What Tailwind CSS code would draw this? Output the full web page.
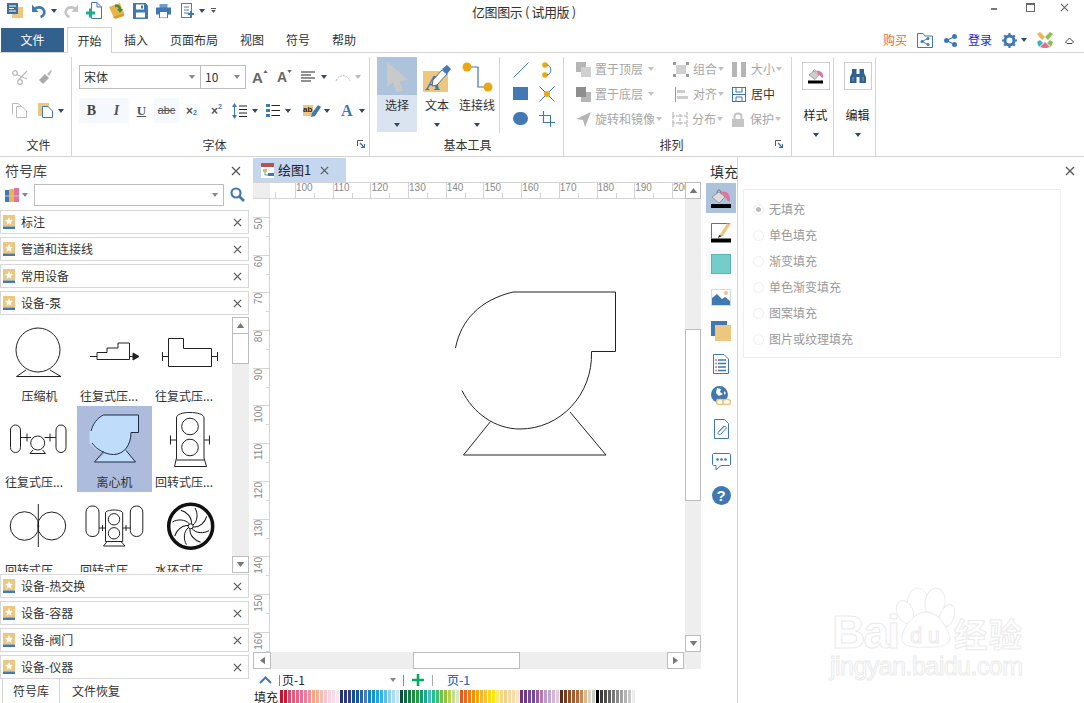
<!DOCTYPE html>
<html lang="zh-CN">
<head>
    <meta charset="UTF-8" />
    <title>亿图图示</title>
    <script src="https://cdn.jsdelivr.net/npm/@tailwindcss/browser@4"></script>
</head>
<body class="bg-white">

<svg class="absolute w-0 h-0">
    <symbol id="caret" viewBox="0 0 6 4"><polygon points="0,0 6,0 3,4" fill="currentColor" /></symbol>
    <symbol id="close" viewBox="0 0 10 10"><path d="M1 1L9 9M9 1L1 9" stroke="currentColor" stroke-width="1.3" fill="none" /></symbol>
    <symbol id="corner" viewBox="0 0 8 8"><path d="M.5 6V.5H6" stroke="#555" fill="none" /><path d="M3 3L7.5 7.5M7.5 4V7.5H4" stroke="#3f6f9f" stroke-width="1.4" fill="none" /></symbol>
    <symbol id="tag" viewBox="0 0 12 14"><rect width="12" height="11.5" fill="#edc67f" /><rect y="11.5" width="12" height="2.5" fill="#4279b3" /><polygon points="6,2 7.2,4.7 10,5 7.9,6.9 8.5,9.7 6,8.2 3.5,9.7 4.1,6.9 2,5 4.8,4.7" fill="#fff" /></symbol>
</svg>

<div class="relative w-[1084px] h-[703px] overflow-hidden flex flex-col font-['Noto_Sans_CJK_SC','Liberation_Sans',sans-serif] text-[12px] text-[#333]">

    <!-- title bar -->
    <div class="relative h-[27px] shrink-0 flex items-center pl-[7px] pb-[6px]">
        <svg class="w-[16px] h-[15px]" viewBox="0 0 16 15"><rect x="5" y="4" width="11" height="11" fill="#edc67f" /><rect width="11" height="11" fill="#3f6f9f" /><path d="M2 3H9M2 5.5H7M2 8H9" stroke="#fff" stroke-width="1.2" /></svg>
        <svg class="w-[15px] h-[15px] ml-[8px]" viewBox="0 0 15 15"><path d="M2.500 8C4 3.500 11 3 13 7.500C14 10 12.500 13 9.500 14" stroke="#4279b3" stroke-width="2.600" fill="none" /><polygon points="1,1.500 1,9 7.500,9" fill="#4279b3" /></svg>
        <svg class="w-[6px] h-[4px] ml-[5px] text-[#2d4a6d]"><use href="#caret" /></svg>
        <svg class="w-[15px] h-[15px] ml-[7px]" viewBox="0 0 15 15"><path d="M12.500 8C11 3.500 4 3 2 7.500C1 10 2.500 13 5.500 14" stroke="#c4c4c4" stroke-width="2.600" fill="none" /><polygon points="14,1.500 14,9 7.500,9" fill="#c4c4c4" /></svg>
        <svg class="w-[16px] h-[17px] ml-[7px]" viewBox="0 0 16 17"><path d="M5.500.5H11L15.500 5V16.500H5.500Z" fill="#fff" stroke="#4279b3" /><path d="M11 .5V5H15.500" fill="none" stroke="#4279b3" /><path d="M0 11H9M4.500 6.500V15.500" stroke="#1cae8c" stroke-width="3" /></svg>
        <svg class="w-[16px] h-[16px] ml-[7px]" viewBox="0 0 16 16"><polygon points="0,4 11,0 15,10 5,15" fill="#e9b54a" /><polygon points="4,14 15,10 15,13 6,16" fill="#d79a2c" /><path d="M6 3C9 2 11 4 11 7" stroke="#3c8f45" stroke-width="2.500" fill="none" /><polygon points="8,6 14,6 11,10" fill="#3c8f45" /></svg>
        <svg class="w-[15px] h-[16px] ml-[8px]" viewBox="0 0 15 16"><path d="M0 0H12.500L15 2.500V16H0Z" fill="#3f78b3" /><rect x="3" y="1.500" width="8" height="5" fill="#fff" /><rect x="3" y="9.500" width="9" height="5" fill="#fff" /><rect x="8" y="2.500" width="2" height="3" fill="#3f78b3" /></svg>
        <svg class="w-[15px] h-[14px] ml-[8px]" viewBox="0 0 15 14"><rect x="3.500" width="8" height="4" fill="#6f9cc8" /><rect y="3.500" width="15" height="7" fill="#3f78b3" /><rect x="3.500" y="7.500" width="8" height="6.500" fill="#fff" stroke="#3f78b3" /></svg>
        <svg class="w-[14px] h-[16px] ml-[10px]" viewBox="0 0 14 16"><rect x=".5" y=".5" width="10" height="14" fill="#fff" stroke="#5a7d9f" /><path d="M3 4H8M3 7H8M3 10H8" stroke="#5a7d9f" /><path d="M7 11H13M10 8V14" stroke="#3f78b3" stroke-width="2" /></svg>
        <svg class="w-[6px] h-[4px] ml-[4px] text-[#2d4a6d]"><use href="#caret" /></svg>
        <div class="ml-[6px] flex flex-col gap-[1px] text-[#555]"><div class="w-[5px] h-px bg-[#555]"></div><svg class="w-[5px] h-[3px]"><use href="#caret" /></svg></div>

        <div class="absolute left-[472px] top-[3px] text-[13px] leading-[18px] text-[#333] tracking-[-0.4px]">亿图图示 ( 试用版 )</div>

        <div class="absolute left-[991px] top-0 flex items-center h-[14px]">
            <div class="w-[6px] h-[2px] bg-[#777] mt-[4px]"></div>
            <div class="w-[9px] h-[9px] border border-[#666] border-t-2 ml-[29px]"></div>
            <svg class="w-[9px] h-[9px] ml-[25px] text-[#666]"><use href="#close" /></svg>
        </div>
    </div>

    <!-- ribbon tabs -->
    <div class="relative z-10 h-[25px] shrink-0 flex items-end text-[12px]">
        <div class="ml-[1px] w-[63px] h-[24px] bg-[#33618e] text-white flex items-center justify-center">文件</div>
        <div class="ml-[3px] w-[45px] h-[26px] -mb-px bg-white border border-b-0 border-[#d0d0d0] flex items-center justify-center">开始</div>
        <div class="ml-[12px] w-[24px] h-[24px] flex items-center">插入</div>
        <div class="ml-[22px] w-[48px] h-[24px] flex items-center">页面布局</div>
        <div class="ml-[22px] w-[24px] h-[24px] flex items-center">视图</div>
        <div class="ml-[22px] w-[24px] h-[24px] flex items-center">符号</div>
        <div class="ml-[22px] w-[24px] h-[24px] flex items-center">帮助</div>

        <div class="ml-auto h-[24px] flex items-center pr-[10px]">
            <span class="text-[#f26d0c]">购买</span>
            <svg class="w-[16px] h-[15px] ml-[10px]" viewBox="0 0 16 15"><path d="M.5 14.500V.5H6L8 3H15.500V14.500Z" fill="none" stroke="#3f78b3" /><circle cx="5" cy="8.500" r="1.500" fill="#3f78b3" /><circle cx="11" cy="5.500" r="1.500" fill="#3f78b3" /><circle cx="11" cy="11.500" r="1.500" fill="#3f78b3" /><path d="M5 8.500L11 5.500M5 8.500L11 11.500" stroke="#3f78b3" /></svg>
            <svg class="w-[13px] h-[13px] ml-[11px]" viewBox="0 0 13 13"><circle cx="2.500" cy="6.500" r="2.500" fill="#3f78b3" /><circle cx="10.500" cy="2.500" r="2.500" fill="#3f78b3" /><circle cx="10.500" cy="10.500" r="2.500" fill="#3f78b3" /><path d="M2.500 6.500L10.500 2.500M2.500 6.500L10.500 10.500" stroke="#3f78b3" stroke-width="1.300" /></svg>
            <span class="ml-[11px] text-[#1a1ae0]">登录</span>
            <svg class="w-[15px] h-[15px] ml-[10px]" viewBox="0 0 15 15"><circle cx="7.500" cy="7.500" r="4.500" fill="none" stroke="#3f78b3" stroke-width="3" /><path d="M7.500 0V15M0 7.500H15M2.200 2.200L12.800 12.800M12.800 2.200L2.200 12.800" stroke="#3f78b3" stroke-width="2.200" stroke-dasharray="2.500 10 2.500" /></svg>
            <svg class="w-[6px] h-[4px] ml-[4px] text-[#2d4a6d]"><use href="#caret" /></svg>
            <svg class="w-[16px] h-[16px] ml-[10px]" viewBox="0 0 16 16"><polygon points="0,2 3,0 8,5 5,8" fill="#edb54a" /><polygon points="16,2 13,0 8,5 11,8" fill="#8cc152" /><polygon points="0,10 3,8 6,11 2,15" fill="#2fb4c9" /><polygon points="16,10 13,8 10,11 14,15" fill="#8cc152" /><polygon points="3,15 8,10 13,15 10,16 6,16" fill="#ec6a94" /></svg>
            <svg class="w-[9px] h-[7px] ml-[12px]" viewBox="0 0 9 7"><path d="M.5 5L4.500 1L8.500 5L7 6.500H2Z" fill="none" stroke="#444" /></svg>
        </div>
    </div>

    <!-- ribbon -->
    <div class="h-[105px] shrink-0 flex border-y border-[#d4d4d4] pt-[4px] text-[12px]">

        <!-- file group -->
        <div class="w-[72px] flex flex-col border-r border-[#d4d4d4]">
            <div class="h-[76px] pt-[13px]">
                <div class="flex items-center pl-[12px]">
                    <svg class="w-[16px] h-[15px]" viewBox="0 0 16 15"><circle cx="3" cy="3" r="2.300" fill="none" stroke="#bbb" stroke-width="1.300" /><circle cx="8" cy="12" r="2.300" fill="none" stroke="#bbb" stroke-width="1.300" /><path d="M4.500 4.500L15 9M7 9.500L15 1" stroke="#bbb" stroke-width="1.300" /></svg>
                    <svg class="w-[14px] h-[15px] ml-[10px]" viewBox="0 0 14 15"><polygon points="9,4 13,0 14,1 11,6" fill="#bbb" /><polygon points="1,10 7,4 11,8 5,14" fill="#aaa" /></svg>
                </div>
                <div class="flex items-center pl-[12px] mt-[18px]">
                    <svg class="w-[15px] h-[15px]" viewBox="0 0 15 15"><path d="M.5 11.500V.5H6L9 3" fill="none" stroke="#bbb" /><path d="M4.500 14.500V3.500H10L14.500 8V14.500Z" fill="#fff" stroke="#bbb" /></svg>
                    <svg class="w-[15px] h-[15px] ml-[11px]" viewBox="0 0 15 15"><rect width="11" height="13" fill="#edc67f" /><path d="M4.500 14.500V3.500H10L14.500 8V14.500Z" fill="#fff" stroke="#3f78b3" /></svg>
                    <svg class="w-[6px] h-[4px] ml-[5px] text-[#2d4a6d]"><use href="#caret" /></svg>
                </div>
            </div>
            <div class="flex-1 flex items-center justify-center pl-[6px]">文件</div>
        </div>

        <!-- font group -->
        <div class="relative w-[298px] flex flex-col border-r border-[#d4d4d4]">
            <div class="h-[76px] pt-[8px] pl-[7px]">
                <div class="flex items-center h-[24px]">
                    <div class="w-[122px] h-[24px] border border-[#bdbdbd] flex items-center justify-between pl-[4px] pr-[5px]">宋体<svg class="w-[6px] h-[4px] text-[#888]"><use href="#caret" /></svg></div>
                    <div class="w-[45px] h-[24px] border border-l-0 border-[#bdbdbd] flex items-center justify-between pl-[4px] pr-[5px]">10<svg class="w-[6px] h-[4px] text-[#888]"><use href="#caret" /></svg></div>
                    <div class="ml-[6px] w-[17px] flex items-start font-['Liberation_Sans'] text-[15px] text-[#666] font-bold leading-none">A<svg class="w-[5px] h-[3px] text-[#666]" viewBox="0 0 6 4"><polygon points="0,4 6,4 3,0" fill="currentColor" /></svg></div>
                    <div class="ml-[8px] w-[17px] flex items-start font-['Liberation_Sans'] text-[14px] text-[#666] font-bold leading-none">A<svg class="w-[5px] h-[3px] text-[#666]"><use href="#caret" /></svg></div>
                    <svg class="w-[14px] h-[12px] ml-[7px]" viewBox="0 0 14 12"><path d="M0 1H14M0 4H10M0 7H14M0 10H10" stroke="#222" /></svg>
                    <svg class="w-[6px] h-[4px] ml-[6px] text-[#2d4a6d]"><use href="#caret" /></svg>
                    <svg class="w-[16px] h-[9px] ml-[8px]" viewBox="0 0 16 9"><path d="M1 8C3 1 13 1 15 8" fill="none" stroke="#bbb" stroke-dasharray="2 1" /></svg>
                    <svg class="w-[6px] h-[4px] ml-[4px] text-[#bbb]"><use href="#caret" /></svg>
                </div>
                <div class="flex items-center h-[25px] mt-[9px]">
                    <div class="w-[25px] h-[25px] bg-[#f5f8fc] flex items-center justify-center font-['Liberation_Serif'] font-bold text-[14px] text-[#444]">B</div>
                    <div class="w-[25px] h-[25px] bg-[#f5f8fc] flex items-center justify-center font-['Liberation_Serif'] italic font-bold text-[14px] text-[#555]">I</div>
                    <div class="w-[25px] h-[25px] flex items-center justify-center font-['Liberation_Serif'] underline font-bold text-[13px] text-[#555]">U</div>
                    <div class="w-[25px] h-[25px] bg-[#f5f8fc] flex items-center justify-center font-['Liberation_Sans'] line-through text-[11px] text-[#555]">abc</div>
                    <div class="w-[25px] h-[25px] flex items-center justify-center font-['Liberation_Sans'] font-bold text-[12px] text-[#555]">×<span class="text-[7px] text-[#3f78b3] mt-[6px]">2</span></div>
                    <div class="w-[25px] h-[25px] flex items-center justify-center font-['Liberation_Sans'] font-bold text-[12px] text-[#555]">×<span class="text-[7px] text-[#3f78b3] mb-[6px]">2</span></div>
                    <svg class="w-[15px] h-[16px] ml-[3px]" viewBox="0 0 15 16"><path d="M2.500 2V14" stroke="#3f78b3" /><polygon points="0,4 5,4 2.500,0" fill="#3f78b3" /><polygon points="0,12 5,12 2.500,16" fill="#3f78b3" /><path d="M7 3H15M7 6.500H15M7 10H15M7 13.500H15" stroke="#222" /></svg>
                    <svg class="w-[6px] h-[4px] ml-[5px] text-[#2d4a6d]"><use href="#caret" /></svg>
                    <svg class="w-[14px] h-[13px] ml-[8px]" viewBox="0 0 14 13"><path d="M0 0H4V3H0ZM0 5H4V8H0ZM0 10H4V13H0Z" fill="#3f78b3" /><path d="M5.500 1.500H14M5.500 6.500H14M5.500 11.500H14" stroke="#222" /></svg>
                    <svg class="w-[6px] h-[4px] ml-[5px] text-[#2d4a6d]"><use href="#caret" /></svg>
                    <svg class="w-[18px] h-[14px] ml-[12px]" viewBox="0 0 18 14"><rect y="1" width="10" height="11" fill="#edc67f" /><text x="0" y="8" font-size="8" font-family="Liberation Sans" font-weight="bold" fill="#222">ab</text><polygon points="9,9 15,1 18,3 12,12 8,13" fill="#3f78b3" /></svg>
                    <svg class="w-[6px] h-[4px] ml-[3px] text-[#2d4a6d]"><use href="#caret" /></svg>
                    <div class="ml-[11px] w-[12px] font-['Liberation_Serif'] font-bold text-[16px] leading-none text-[#3f78b3]">A</div>
                    <svg class="w-[6px] h-[4px] ml-[6px] text-[#2d4a6d]"><use href="#caret" /></svg>
                </div>
            </div>
            <div class="relative flex-1 flex items-center justify-center pr-[12px]">字体
                <svg class="absolute right-[4px] top-[7px] w-[8px] h-[8px]"><use href="#corner" /></svg>
            </div>
        </div>

        <!-- basic tools -->
        <div class="w-[194px] flex flex-col border-r border-[#d4d4d4]">
            <div class="h-[76px] flex pl-[7px]">
                <div class="w-[40px] h-[75px] flex flex-col">
                    <div class="h-[38px] bg-[#adc3dc] flex items-center justify-center">
                        <svg class="w-[24px] h-[31px]" viewBox="0 0 24 31"><polygon points="2,1 23,19 14,20 18,30 11,31 8,21 2,26" fill="#c9c9c9" /></svg>
                    </div>
                    <div class="flex-1 bg-[#d9e4f0] flex flex-col items-center pt-[1px]">
                        <span class="leading-[18px]">选择</span>
                        <svg class="w-[6px] h-[4px] mt-[9px] text-[#2d4a6d]"><use href="#caret" /></svg>
                    </div>
                </div>
                <div class="w-[40px] flex flex-col items-center">
                    <svg class="w-[28px] h-[32px] mt-[5px]" viewBox="0 0 28 32"><rect y="9" width="25" height="21" fill="#edc67f" /><text x="3" y="28" font-size="22" font-family="Liberation Serif" font-style="italic" font-weight="bold" fill="#3f78b3">A</text><polygon points="10,18 19,8 24,12 14,23 9,24" fill="#fff" stroke="#4a6d90" /><polygon points="19,7 24,3 28,7 24,12" fill="#3f78b3" /></svg>
                    <span class="leading-[18px] mt-[2px]">文本</span>
                    <svg class="w-[6px] h-[4px] mt-[9px] text-[#2d4a6d]"><use href="#caret" /></svg>
                </div>
                <div class="w-[40px] flex flex-col items-center">
                    <svg class="w-[31px] h-[30px] mt-[5px] mb-[3px]" viewBox="0 0 31 30"><path d="M5 5H16V25H26" fill="none" stroke="#3f78b3" stroke-width="1.200" /><circle cx="5" cy="5" r="4.500" fill="#eba613" /><circle cx="26" cy="25" r="4.500" fill="#eba613" /></svg>
                    <span class="leading-[18px] mt-[1px] whitespace-nowrap">连接线</span>
                    <svg class="w-[6px] h-[4px] mt-[9px] text-[#2d4a6d]"><use href="#caret" /></svg>
                </div>
                <div class="w-px h-[76px] bg-[#d4d4d4] ml-[2px]"></div>
                <div class="ml-[13px] pt-[5px] grid grid-cols-2 grid-rows-3 w-[42px] h-[80px] gap-x-[9px]">
                    <svg class="w-[16px] h-[16px]" viewBox="0 0 16 16"><path d="M.5 15.500L15.500 .5" stroke="#3f78b3" /></svg>
                    <svg class="w-[16px] h-[16px]" viewBox="0 0 16 16"><circle cx="6" cy="3" r="2.800" fill="#eba613" /><circle cx="6" cy="13" r="2.800" fill="#eba613" /><path d="M8 3C13 3 13 13 8 13" fill="none" stroke="#3f78b3" /></svg>
                    <div class="w-[15px] h-[13px] bg-[#4279b3]"></div>
                    <svg class="w-[16px] h-[16px] -mt-[1px]" viewBox="0 0 16 16"><path d="M.5 .5L15.500 15.500M15.500 .5L.5 15.500" stroke="#3f78b3" /><circle cx="8" cy="8" r="3" fill="#eba613" /></svg>
                    <div class="w-[15px] h-[13px] rounded-full bg-[#4279b3]"></div>
                    <svg class="w-[16px] h-[16px] -mt-[1px]" viewBox="0 0 16 16"><path d="M0 4.500H11.500V16M4.500 0V11.500H16" fill="none" stroke="#3f78b3" stroke-width="1.200" /></svg>
                </div>
            </div>
            <div class="flex-1 flex items-center justify-center pl-[2px]">基本工具</div>
        </div>

        <!-- arrange -->
        <div class="relative w-[228px] flex flex-col border-r border-[#d4d4d4] text-[#a6a6a6]">
            <div class="h-[76px] pl-[12px] flex flex-col gap-[1px]">
                <div class="flex items-center h-[24px]">
                    <svg class="w-[15px] h-[15px]" viewBox="0 0 15 15"><rect width="10" height="10" fill="#b5b5b5" /><rect x="5" y="5" width="10" height="10" fill="#d0d0d0" /></svg>
                    <span class="ml-[4px] w-[48px]">置于顶层</span>
                    <svg class="w-[6px] h-[4px] ml-[5px] text-[#c2c2c2]"><use href="#caret" /></svg>
                    <svg class="w-[16px] h-[15px] ml-[19px]" viewBox="0 0 16 15"><rect x="3" y="3" width="10" height="9" fill="#d0d0d0" /><path d="M0 0H3V3H0ZM13 0H16V3H13ZM0 12H3V15H0ZM13 12H16V15H13Z" fill="#999" /></svg>
                    <span class="ml-[4px] w-[24px]">组合</span>
                    <svg class="w-[6px] h-[4px] ml-[1px] text-[#c2c2c2]"><use href="#caret" /></svg>
                    <svg class="w-[14px] h-[15px] ml-[8px]" viewBox="0 0 14 15"><rect width="5" height="15" fill="#b5b5b5" /><rect x="9" width="5" height="15" fill="#b5b5b5" /></svg>
                    <span class="ml-[5px] w-[24px]">大小</span>
                    <svg class="w-[6px] h-[4px] ml-[1px] text-[#c2c2c2]"><use href="#caret" /></svg>
                </div>
                <div class="flex items-center h-[24px]">
                    <svg class="w-[15px] h-[15px]" viewBox="0 0 15 15"><rect x="5" y="5" width="10" height="10" fill="#b5b5b5" /><rect width="10" height="10" fill="#8e8e8e" /></svg>
                    <span class="ml-[4px] w-[48px]">置于底层</span>
                    <svg class="w-[6px] h-[4px] ml-[5px] text-[#c2c2c2]"><use href="#caret" /></svg>
                    <svg class="w-[16px] h-[15px] ml-[19px]" viewBox="0 0 16 15"><path d="M2.500 0V15" stroke="#999" /><rect x="4" y="3" width="8" height="3" fill="#ccc" /><rect x="4" y="9" width="11" height="3" fill="#ccc" /></svg>
                    <span class="ml-[4px] w-[24px]">对齐</span>
                    <svg class="w-[6px] h-[4px] ml-[1px] text-[#c2c2c2]"><use href="#caret" /></svg>
                    <svg class="w-[14px] h-[15px] ml-[8px]" viewBox="0 0 14 15"><rect x=".5" y=".5" width="13" height="14" fill="none" stroke="#3f78b3" /><path d="M4 .5V5H10V.5M.5 7.500H13.500M4 14.500V10H10V14.500" fill="none" stroke="#3f78b3" /></svg>
                    <span class="ml-[5px] w-[24px] text-[#333]">居中</span>
                </div>
                <div class="flex items-center h-[24px]">
                    <svg class="w-[15px] h-[15px]" viewBox="0 0 15 15"><polygon points="0,7 15,0 9,15 7,8" fill="#b5b5b5" /></svg>
                    <span class="ml-[4px] w-[60px] whitespace-nowrap">旋转和镜像</span>
                    <svg class="w-[6px] h-[4px] ml-[1px] text-[#c2c2c2]"><use href="#caret" /></svg>
                    <svg class="w-[16px] h-[15px] ml-[10px]" viewBox="0 0 16 15"><path d="M1 0V15M15 0V15M0 4H16M0 11H16M8 2V13" stroke="#aaa" fill="none" stroke-dasharray="3 1" /></svg>
                    <span class="ml-[4px] w-[24px]">分布</span>
                    <svg class="w-[6px] h-[4px] ml-[1px] text-[#c2c2c2]"><use href="#caret" /></svg>
                    <svg class="w-[14px] h-[15px] ml-[8px]" viewBox="0 0 14 15"><path d="M3.500 7V4.500C3.500 0.500 10.500 0.500 10.500 4.500V7" fill="none" stroke="#c4c4c4" stroke-width="2" /><rect x="1" y="7" width="12" height="8" fill="#c4c4c4" /></svg>
                    <span class="ml-[5px] w-[24px]">保护</span>
                    <svg class="w-[6px] h-[4px] ml-[1px] text-[#c2c2c2]"><use href="#caret" /></svg>
                </div>
            </div>
            <div class="relative flex-1 flex items-center justify-center text-[#333] pr-[12px]">排列
                <svg class="absolute right-[8px] top-[7px] w-[8px] h-[8px]"><use href="#corner" /></svg>
            </div>
        </div>

        <!-- style -->
        <div class="w-[42px] flex flex-col items-center border-r border-[#d4d4d4] pt-[5px] pl-[6px]">
            <div class="w-[28px] h-[28px] shrink-0 border border-[#cfcfcf] flex items-center justify-center">
                <svg class="w-[16px] h-[16px]" viewBox="0 0 16 16"><path d="M5 4C5 1 8 1 8 4" fill="none" stroke="#777" stroke-width=".7" /><polygon points="1,7 6,3 11,7 7,11.500" fill="#cfcfcf" stroke="#777" stroke-width=".6" /><path d="M8 3C11 2 16 4 15 9.500C14 10.500 13 8 11 7Z" fill="#e4739b" /><rect y="12.500" width="15" height="3" fill="#000" /></svg>
            </div>
            <span class="mt-[16px] leading-[18px] text-[#222]">样式</span>
            <svg class="w-[6px] h-[4px] mt-[9px] text-[#2d4a6d]"><use href="#caret" /></svg>
        </div>

        <!-- edit -->
        <div class="w-[42px] flex flex-col items-center border-r border-[#d4d4d4] pt-[5px] pl-[6px]">
            <div class="w-[28px] h-[28px] shrink-0 border border-[#cfcfcf] flex items-center justify-center">
                <svg class="w-[16px] h-[16px]" viewBox="0 0 16 16"><path d="M2 1H6.500V6H9.500V1H14V5L16 9V15H9.500V9H6.500V15H0V9L2 5Z" fill="#33618e" /><path d="M3 9V13M13 9V13" stroke="#7fa3c7" /></svg>
            </div>
            <span class="mt-[16px] leading-[18px] text-[#222]">编辑</span>
            <svg class="w-[6px] h-[4px] mt-[9px] text-[#2d4a6d]"><use href="#caret" /></svg>
        </div>
    </div>

    <!-- main -->
    <div class="flex-1 flex min-h-0">

        <!-- symbol library -->
        <div class="w-[253px] shrink-0 flex flex-col">
            <div class="h-[27px] shrink-0 flex items-center justify-between pl-[5px] pr-[12px] text-[14px] text-[#444]">符号库
                <svg class="w-[10px] h-[10px] text-[#555]"><use href="#close" /></svg>
            </div>
            <div class="h-[26px] shrink-0 flex items-start pl-[5px]">
                <svg class="w-[14px] h-[15px] mt-[3px]" viewBox="0 0 14 15"><rect y="3" width="4.500" height="12" fill="#3f78b3" /><rect x="4.500" y="2" width="4.500" height="13" fill="#edb54a" /><rect x="9" y="1" width="5" height="14" fill="#e4739b" /><path d="M0 9H14" stroke="#bcd" /></svg>
                <svg class="w-[6px] h-[4px] ml-[3px] mt-[9px] text-[#888]"><use href="#caret" /></svg>
                <div class="ml-[6px] w-[190px] h-[22px] border border-[#bdbdbd] flex items-center justify-end pr-[5px]"><svg class="w-[6px] h-[4px] text-[#888]"><use href="#caret" /></svg></div>
                <svg class="w-[15px] h-[15px] ml-[6px] mt-[3px]" viewBox="0 0 15 15"><circle cx="6" cy="6" r="4.500" fill="none" stroke="#3f78b3" stroke-width="2.200" /><path d="M9.500 9.500L14 14" stroke="#3f78b3" stroke-width="2.600" /></svg>
            </div>

            <div class="w-[249px] flex flex-col gap-[3px] shrink-0">
                <div class="h-[24px] border border-[#d8d8d8] flex items-center pl-[2px] pr-[6px]"><svg class="w-[12px] h-[14px]"><use href="#tag" /></svg><span class="ml-[6px] flex-1">标注</span><svg class="w-[9px] h-[9px] text-[#555]"><use href="#close" /></svg></div>
                <div class="h-[24px] border border-[#d8d8d8] flex items-center pl-[2px] pr-[6px]"><svg class="w-[12px] h-[14px]"><use href="#tag" /></svg><span class="ml-[6px] flex-1">管道和连接线</span><svg class="w-[9px] h-[9px] text-[#555]"><use href="#close" /></svg></div>
                <div class="h-[24px] border border-[#d8d8d8] flex items-center pl-[2px] pr-[6px]"><svg class="w-[12px] h-[14px]"><use href="#tag" /></svg><span class="ml-[6px] flex-1">常用设备</span><svg class="w-[9px] h-[9px] text-[#555]"><use href="#close" /></svg></div>
                <div class="h-[24px] border border-[#d8d8d8] flex items-center pl-[2px] pr-[6px]"><svg class="w-[12px] h-[14px]"><use href="#tag" /></svg><span class="ml-[6px] flex-1">设备-泵</span><svg class="w-[9px] h-[9px] text-[#555]"><use href="#close" /></svg></div>
            </div>

            <!-- gallery -->
            <div class="h-[259px] shrink-0 w-[249px] flex overflow-hidden">
                <div class="w-[232px] h-[257px] overflow-hidden pl-[2px] pt-[5px]">
                    <div class="grid grid-cols-[75px_75px_75px] auto-rows-[86px]">
                        <div class="flex flex-col items-center">
                            <svg class="w-[75px] h-[70px]" viewBox="2 320 75 70" fill="none" stroke="#222" stroke-width="1"><circle cx="38" cy="350" r="22" /><path d="M26 370L16.500 376.500H61L50 370" /></svg>
                            <span class="leading-[16px] -mt-[2px] whitespace-nowrap">压缩机</span>
                        </div>
                        <div class="flex flex-col items-center">
                            <svg class="w-[75px] h-[70px]" viewBox="77 320 75 70" fill="none" stroke="#222" stroke-width="1"><path d="M90 356.500H97M97 359.500V352.500H107V348H118V343H129.500V359.500Z" /><path d="M129.500 356.500H134" /><polygon points="133,353 139,356.500 133,360" fill="#222" /></svg>
                            <span class="leading-[16px] -mt-[2px] pr-[11px] whitespace-nowrap">往复式压...</span>
                        </div>
                        <div class="flex flex-col items-center">
                            <svg class="w-[75px] h-[70px]" viewBox="152 320 75 70" fill="none" stroke="#222" stroke-width="1"><path d="M168.500 338.500H183.500V348.500H211.500V366.500H168.500ZM168.500 356.500H162.500M162.500 352V361M211.500 356.500H217.500M217.500 352V361" /></svg>
                            <span class="leading-[16px] -mt-[2px] pr-[11px] whitespace-nowrap">往复式压...</span>
                        </div>

                        <div class="flex flex-col items-center">
                            <svg class="w-[75px] h-[70px]" viewBox="2 406 75 70" fill="none" stroke="#222" stroke-width="1"><rect x="10.500" y="425" width="10" height="27.500" rx="5" /><rect x="56" y="425" width="10" height="27.500" rx="5" /><path d="M20.500 437.500H31M44.500 437.500H56M27 433.500V441.500M50 433.500V441.500" /><circle cx="37.700" cy="443" r="7" /><path d="M33 450L30 453.500H45.500L42.500 450" /></svg>
                            <span class="leading-[16px] -mt-[2px] pr-[11px] whitespace-nowrap">往复式压...</span>
                        </div>
                        <div class="flex flex-col items-center bg-[#adbcdc]">
                            <svg class="w-[75px] h-[70px]" viewBox="77 406 75 70"><path d="M89.500 432C93 423 97 418 103.500 415H138.500V432.500H131C131 445 124 454.500 113.500 454.500C111 454.500 109 454 106 453L94.500 462H135.500L125.500 450C123 452 119 454 113.500 454.500C103 454.500 95 450 89.500 443Z" fill="#bfdcfb" /><path d="M91 431C93 424 97 418 103.500 415H138.500V432.500H131C131 445 124 454.500 113.500 454.500C106 454.500 97 450 92 443M103.500 451.500L94.500 462H135.500L126 450.500" fill="none" stroke="#1c2d44" /></svg>
                            <span class="leading-[16px] -mt-[2px] whitespace-nowrap">离心机</span>
                        </div>
                        <div class="flex flex-col items-center">
                            <svg class="w-[75px] h-[70px]" viewBox="152 406 75 70" fill="none" stroke="#222" stroke-width="1"><path d="M176.500 418C176.500 414 183 412.500 190 412.500C197 412.500 204 414 204 418V458L206.500 466.500H174.500L176.500 458ZM176.500 460H204" /><circle cx="190" cy="426.500" r="8.300" /><circle cx="190" cy="447.500" r="8.300" /><path d="M170.500 440H176.500M204 440H209.500M170.500 435.500V444.500M209.500 435.500V444.500" /></svg>
                            <span class="leading-[16px] -mt-[2px] pr-[11px] whitespace-nowrap">回转式压...</span>
                        </div>

                        <div class="flex flex-col items-center">
                            <svg class="w-[75px] h-[70px]" viewBox="2 492 75 70" fill="none" stroke="#222" stroke-width="1"><circle cx="24.500" cy="526" r="14.300" /><circle cx="51.700" cy="526" r="14" /><path d="M38.300 504V547" /></svg>
                            <span class="leading-[16px] pr-[11px] whitespace-nowrap">回转式压...</span>
                        </div>
                        <div class="flex flex-col items-center">
                            <svg class="w-[75px] h-[70px]" viewBox="77 492 75 70" fill="none" stroke="#222" stroke-width="1"><rect x="86" y="506" width="13" height="30.500" rx="6" /><rect x="130.300" y="506" width="12.500" height="30.500" rx="6" /><path d="M105.500 513C105.500 511 110 510 114 510C118 510 122.700 511 122.700 513V541.500H105.500ZM99 528H105.500M122.700 528H130.300M102.500 525V531M126 525V531M107 541.500L103.500 546H125L121 541.500" /><circle cx="114" cy="519.300" r="5.700" /><circle cx="114" cy="533.300" r="5.700" /></svg>
                            <span class="leading-[16px] pr-[11px] whitespace-nowrap">回转式压...</span>
                        </div>
                        <div class="flex flex-col items-center">
                            <svg class="w-[75px] h-[70px]" viewBox="152 492 75 70" fill="none" stroke="#111" stroke-width="1"><circle cx="190.700" cy="526.300" r="22" stroke-width="3.500" /><circle cx="190.700" cy="526.300" r="2.500" /><g><path d="M193 525C198 521 198 513 195 508" /><path d="M193 525C198 521 198 513 195 508" transform="rotate(45 190.700 526.300)" /><path d="M193 525C198 521 198 513 195 508" transform="rotate(90 190.700 526.300)" /><path d="M193 525C198 521 198 513 195 508" transform="rotate(135 190.700 526.300)" /><path d="M193 525C198 521 198 513 195 508" transform="rotate(180 190.700 526.300)" /><path d="M193 525C198 521 198 513 195 508" transform="rotate(225 190.700 526.300)" /><path d="M193 525C198 521 198 513 195 508" transform="rotate(270 190.700 526.300)" /><path d="M193 525C198 521 198 513 195 508" transform="rotate(315 190.700 526.300)" /></g></svg>
                            <span class="leading-[16px] pr-[11px] whitespace-nowrap">水环式压...</span>
                        </div>
                    </div>
                </div>
                <!-- gallery scrollbar -->
                <div class="w-[17px] h-[256px] mt-[2px] bg-[#eeeeee] flex flex-col">
                    <div class="h-[17px] border border-[#bdbdbd] bg-white flex items-center justify-center"><svg class="w-[9px] h-[5px] text-[#777]" viewBox="0 0 6 4"><polygon points="0,4 6,4 3,0" fill="currentColor" /></svg></div>
                    <div class="h-[30px] border border-t-0 border-[#bdbdbd] bg-white"></div>
                    <div class="flex-1"></div>
                    <div class="h-[17px] border border-[#bdbdbd] bg-white flex items-center justify-center"><svg class="w-[9px] h-[5px] text-[#777]"><use href="#caret" /></svg></div>
                </div>
            </div>

            <div class="w-[249px] flex flex-col gap-[3px] shrink-0">
                <div class="h-[24px] border border-[#d8d8d8] flex items-center pl-[2px] pr-[6px]"><svg class="w-[12px] h-[14px]"><use href="#tag" /></svg><span class="ml-[6px] flex-1">设备-热交换</span><svg class="w-[9px] h-[9px] text-[#555]"><use href="#close" /></svg></div>
                <div class="h-[24px] border border-[#d8d8d8] flex items-center pl-[2px] pr-[6px]"><svg class="w-[12px] h-[14px]"><use href="#tag" /></svg><span class="ml-[6px] flex-1">设备-容器</span><svg class="w-[9px] h-[9px] text-[#555]"><use href="#close" /></svg></div>
                <div class="h-[24px] border border-[#d8d8d8] flex items-center pl-[2px] pr-[6px]"><svg class="w-[12px] h-[14px]"><use href="#tag" /></svg><span class="ml-[6px] flex-1">设备-阀门</span><svg class="w-[9px] h-[9px] text-[#555]"><use href="#close" /></svg></div>
                <div class="h-[24px] border border-[#d8d8d8] flex items-center pl-[2px] pr-[6px]"><svg class="w-[12px] h-[14px]"><use href="#tag" /></svg><span class="ml-[6px] flex-1">设备-仪器</span><svg class="w-[9px] h-[9px] text-[#555]"><use href="#close" /></svg></div>
            </div>
            <div class="flex h-[24px] pl-[2px]">
                <div class="w-[58px] border-x border-[#d4d4d4] flex items-center justify-center">符号库</div>
                <div class="pl-[12px] flex items-center">文件恢复</div>
            </div>
        </div>

        <!-- canvas column -->
        <div class="w-[448px] shrink-0 flex flex-col">
            <div class="h-[25px] shrink-0 pt-[1px]">
                <div class="w-[93px] h-[24px] bg-[#c5d7ee] flex items-center pl-[7px]">
                    <svg class="w-[15px] h-[15px]" viewBox="0 0 15 15"><rect x="1" width="13" height="4" fill="#c0504d" /><rect x="1" y="4" width="13" height="11" fill="#fff" /><rect x="3" y="6" width="4" height="3" fill="#edb54a" /><rect x="8" y="10" width="6" height="3" fill="#4279b3" /><path d="M5 9V12H8" stroke="#5a9" fill="none" /></svg>
                    <span class="ml-[3px] text-[13px] text-[#222]">绘图1</span>
                    <svg class="w-[9px] h-[9px] ml-[9px] text-[#555]"><use href="#close" /></svg>
                </div>
            </div>
            <div class="relative flex-1 min-h-0 flex flex-col">
                <!-- hruler + canvas -->
                <div class="flex h-[470px] shrink-0">
                    <div class="w-[432px] flex flex-col">
                        <div class="h-[17px] flex border-y border-[#d4d4d4] overflow-hidden">
                            <div class="w-[17px] shrink-0 bg-[#eeeeee]"></div>
                            <div id="hruler" class="flex"></div>
                        </div>
                        <div class="flex-1 flex min-h-0">
                            <div id="vruler" class="w-[17px] shrink-0 border-r border-[#d4d4d4] overflow-hidden flex flex-col"></div>
                            <div class="relative flex-1 bg-white">
                                <!-- canvas shape, origin 270,199 -->
                                <svg class="absolute left-0 top-0 w-[415px] h-[453px]" viewBox="270 199 415 453" fill="none" stroke="#222" stroke-width="1">
                                    <path d="M455.500 348C461 320 480 300 513 292H615.500V351.500H591.500C593 395 560 429 520 429C495 429 473 413 462 390.500" />
                                    <path d="M490.500 421.500L463.500 455H606L570 412" />
                                </svg>
                            </div>
                        </div>
                    </div>
                    <!-- vertical scrollbar -->
                    <div class="w-[17px] bg-[#eeeeee] flex flex-col">
                        <div class="h-[17px] border border-[#bdbdbd] bg-white flex items-center justify-center"><svg class="w-[9px] h-[5px] text-[#777]" viewBox="0 0 6 4"><polygon points="0,4 6,4 3,0" fill="currentColor" /></svg></div>
                        <div class="h-[130px]"></div>
                        <div class="h-[172px] border border-[#bdbdbd] bg-white"></div>
                        <div class="flex-1"></div>
                        <div class="h-[17px] border border-[#bdbdbd] bg-white flex items-center justify-center"><svg class="w-[9px] h-[5px] text-[#777]"><use href="#caret" /></svg></div>
                    </div>
                </div>
                <!-- horizontal scrollbar -->
                <div class="h-[17px] shrink-0 bg-[#eeeeee] flex">
                    <div class="w-[18px] border border-[#bdbdbd] bg-white flex items-center justify-center"><svg class="w-[5px] h-[9px] text-[#777]" viewBox="0 0 4 6"><polygon points="4,0 4,6 0,3" fill="currentColor" /></svg></div>
                    <div class="w-[142px]"></div>
                    <div class="w-[107px] border border-[#bdbdbd] bg-white"></div>
                    <div class="w-[147px]"></div>
                    <div class="w-[17px] border border-[#bdbdbd] bg-white flex items-center justify-center"><svg class="w-[5px] h-[9px] text-[#777]" viewBox="0 0 4 6"><polygon points="0,0 0,6 4,3" fill="currentColor" /></svg></div>
                </div>
                <!-- page bar -->
                <div class="h-[21px] shrink-0 flex items-center text-[12px] pt-[1px]">
                    <svg class="w-[13px] h-[8px] ml-[6px]" viewBox="0 0 13 8"><path d="M1 7L6.500 1.500L12 7" fill="none" stroke="#4279b3" stroke-width="2" /></svg>
                    <div class="w-px h-[11px] bg-[#888] ml-[7px]"></div>
                    <span class="ml-[2px] w-[108px] text-[#222]">页-1</span>
                    <svg class="w-[6px] h-[4px] text-[#888]"><use href="#caret" /></svg>
                    <div class="w-px h-[11px] bg-[#888] ml-[7px]"></div>
                    <svg class="w-[12px] h-[12px] ml-[8px]" viewBox="0 0 12 12"><path d="M6 0V12M0 6H12" stroke="#0fa860" stroke-width="2.600" /></svg>
                    <div class="w-px h-[11px] bg-[#aaa] ml-[8px]"></div>
                    <span class="ml-[14px] font-medium text-[#2f6fc4]">页-1</span>
                </div>
                <!-- colour palette -->
                <div class="h-[14px] flex items-start overflow-hidden">
                    <span class="ml-[1px] w-[26px] leading-[14px] text-[#222]">填充</span>
                    <div id="palette" class="flex h-[13px]"></div>
                </div>
            </div>
        </div>

        <!-- side icons -->
        <div class="ml-[5px] w-[32px] shrink-0 flex flex-col border-r border-[#d4d4d4]">
            <div class="h-[26px] shrink-0"></div>
            <div class="w-[30px] h-[30px] bg-[#adc3dc] flex items-center justify-center">
                <svg class="w-[20px] h-[20px]" viewBox="0 0 20 20"><path d="M6 5C6 1 10 1 10 5V8" fill="none" stroke="#555" stroke-width=".8" /><polygon points="1,9 8,4 14,9 8,15" fill="#ddd" stroke="#777" stroke-width=".6" /><path d="M10 4C14 2 20 5 19 13C17 15 16 11 14 9Z" fill="#e4739b" /><rect y="16" width="20" height="4" fill="#000" /></svg>
            </div>
            <div class="w-[30px] h-[33px] mt-[3px] flex items-center justify-center">
                <svg class="w-[20px] h-[20px]" viewBox="0 0 20 20"><path d="M19 .5H.5V15" fill="none" stroke="#3f78b3" /><path d="M8 13L16 .5H20L12 13Z" fill="#edc67f" /><path d="M7 15L8 12L11 13Z" fill="#333" /><rect y="15.500" width="20" height="4" fill="#000" /></svg>
            </div>
            <div class="w-[30px] h-[30px] bg-[#f8f9fb] flex items-center justify-center">
                <div class="w-[20px] h-[20px] bg-[#74cdc8] border border-[#5cb5ae]"></div>
            </div>
            <div class="w-[30px] h-[36px] flex items-center justify-center">
                <svg class="w-[20px] h-[17px]" viewBox="0 0 20 17"><rect x=".5" y=".5" width="19" height="16" fill="#fff" stroke="#cfdcec" /><path d="M1 16V9L6 5L11 10L14 8L19 12V16Z" fill="#3f78b3" /><circle cx="15" cy="4" r="2" fill="#edc67f" /></svg>
            </div>
            <div class="w-[30px] h-[32px] flex items-center justify-center">
                <svg class="w-[20px] h-[20px]" viewBox="0 0 20 20"><rect width="16" height="15" fill="#3f78b3" /><rect x="4" y="4" width="16" height="16" fill="#edc67f" /></svg>
            </div>
            <div class="w-[30px] h-[33px] flex items-center justify-center">
                <svg class="w-[16px] h-[20px]" viewBox="0 0 16 20"><path d="M.5 .5H11L15.500 5V19.500H.5Z" fill="#fff" stroke="#3f78b3" /><path d="M5 6H13M5 9.500H13M5 13H13M5 16.500H13" stroke="#3f78b3" stroke-width="1.600" /><path d="M2 6H4M2 9.500H4M2 13H4M2 16.500H4" stroke="#e4739b" stroke-width="1.600" /></svg>
            </div>
            <div class="w-[30px] h-[32px] flex items-center justify-center">
                <svg class="w-[20px] h-[20px]" viewBox="0 0 20 20"><circle cx="8.500" cy="8.500" r="8.500" fill="#3f78b3" /><path d="M6 2L10 3L9 6L12 8L8 10L5 7Z" fill="#fff" /><path d="M13 5L15 7L13 9Z" fill="#fff" /><rect x="5.500" y="13.500" width="7" height="5" rx="2.500" fill="#fff" stroke="#edc67f" stroke-width="1.600" /><rect x="12" y="13.500" width="7.500" height="5" rx="2.500" fill="#fff" stroke="#edc67f" stroke-width="1.600" /></svg>
            </div>
            <div class="w-[30px] h-[33px] flex items-center justify-center">
                <svg class="w-[15px] h-[20px]" viewBox="0 0 15 20"><path d="M.5 .5H10.500L14.500 4.500V19.500H.5Z" fill="#fff" stroke="#3f78b3" /><path d="M10 7L4.500 13C3 15 5.500 16.500 7 15L12 9.500C13 8 11 6.500 9.500 8L5 12.500" fill="none" stroke="#3f78b3" /></svg>
            </div>
            <div class="w-[30px] h-[33px] flex items-center justify-center">
                <svg class="w-[19px] h-[18px]" viewBox="0 0 19 18"><path d="M2 .5H17C18 .5 18.500 1 18.500 2V11C18.500 12 18 12.500 17 12.500H9L4 17V12.500H2C1 12.500 .5 12 .5 11V2C.5 1 1 .5 2 .5Z" fill="#fff" stroke="#3f78b3" /><circle cx="5.500" cy="6.500" r="1.300" fill="#3f78b3" /><circle cx="9.500" cy="6.500" r="1.300" fill="#3f78b3" /><circle cx="13.500" cy="6.500" r="1.300" fill="#3f78b3" /></svg>
            </div>
            <div class="w-[30px] h-[34px] flex items-center justify-center">
                <div class="w-[19px] h-[19px] rounded-full bg-[#3f78b3] text-white font-['Liberation_Sans'] font-bold text-[15px] leading-[19px] text-center">?</div>
            </div>
        </div>

        <!-- fill panel -->
        <div class="flex-1 flex flex-col">
            <div class="h-[26px] shrink-0 -ml-[28px] mt-[1px] pr-[9px] flex items-center justify-between text-[14px] text-[#333]">填充
                <svg class="w-[10px] h-[10px] text-[#555]"><use href="#close" /></svg>
            </div>
            <div class="ml-[5px] mt-[5px] w-[318px] h-[169px] border border-[#eeeeee] pl-[9px] pt-[6px] text-[#999]">
                <div class="h-[26px] flex items-center"><div class="w-[11px] h-[11px] rounded-full border border-[#eeeeee] flex items-center justify-center"><div class="w-[5px] h-[5px] rounded-full bg-[#bbbbbb]"></div></div><span class="ml-[5px]">无填充</span></div>
                <div class="h-[26px] flex items-center"><div class="w-[11px] h-[11px] rounded-full border border-[#eeeeee]"></div><span class="ml-[5px]">单色填充</span></div>
                <div class="h-[26px] flex items-center"><div class="w-[11px] h-[11px] rounded-full border border-[#eeeeee]"></div><span class="ml-[5px]">渐变填充</span></div>
                <div class="h-[26px] flex items-center"><div class="w-[11px] h-[11px] rounded-full border border-[#eeeeee]"></div><span class="ml-[5px]">单色渐变填充</span></div>
                <div class="h-[26px] flex items-center"><div class="w-[11px] h-[11px] rounded-full border border-[#eeeeee]"></div><span class="ml-[5px]">图案填充</span></div>
                <div class="h-[26px] flex items-center"><div class="w-[11px] h-[11px] rounded-full border border-[#eeeeee]"></div><span class="ml-[5px]">图片或纹理填充</span></div>
            </div>
        </div>
    </div>

    <!-- watermark overlay -->
    <svg class="absolute left-[820px] top-[570px] w-[264px] h-[133px]" viewBox="0 0 264 133" fill="#fff" stroke="#ebebeb" stroke-width="1">
        <ellipse cx="98" cy="34" rx="11" ry="16" />
        <ellipse cx="115" cy="33" rx="10" ry="15" transform="rotate(8 115 33)" />
        <ellipse cx="85" cy="42" rx="8" ry="12" transform="rotate(-25 85 42)" />
        <ellipse cx="127" cy="46" rx="7" ry="12" transform="rotate(20 127 46)" />
        <path d="M106 42C120 42 128 60 130 68C130 76 118 78 106 77C92 78 80 76 82 66C84 56 94 42 106 42Z" />
        <text x="12" y="78" font-family="Liberation Sans" font-size="46" font-weight="bold" textLength="68">Bai</text>
        <text x="90" y="73" font-family="Liberation Sans" font-size="22" textLength="30">du</text>
        <text x="134" y="77" font-family="Noto Sans CJK SC" font-size="33" font-weight="bold" textLength="68">经验</text>
        <text x="10" y="105" font-family="Liberation Sans" font-size="25" textLength="193">jingyan.baidu.com</text>
    </svg>
</div>

<script>
    // rulers
    const hruler = document.getElementById("hruler");
    let hhtml = '<div class="w-[25px] shrink-0 flex flex-col justify-end"><div class="ml-[5px] w-px h-[6px] bg-[#d4d4d4]"></div></div>';
    for (let n = 100; n <= 200; n += 10) {
        hhtml += '<div class="w-[37.7px] shrink-0 border-l border-[#d4d4d4] flex flex-col justify-between">' +
            '<span class="font-[\'Liberation_Sans\'] text-[10px] leading-[10px] text-[#8a8a8a]">' + n + '</span>' +
            '<div class="ml-[18px] w-px h-[5px] bg-[#d4d4d4]"></div></div>';
    }
    hruler.innerHTML = hhtml;

    const vruler = document.getElementById("vruler");
    let vhtml = '<div class="h-[18px] shrink-0"></div>';
    for (let n = 50; n <= 160; n += 10) {
        vhtml += '<div class="h-[37.7px] shrink-0 border-t border-[#d4d4d4] flex items-start justify-between">' +
            '<span class="font-[\'Liberation_Sans\'] text-[10px] leading-[11px] pl-[2px] [writing-mode:vertical-rl] rotate-180 text-[#8a8a8a]">' + n + '</span>' +
            '<div class="mt-[18px] w-[5px] h-px bg-[#d4d4d4]"></div></div>';
    }
    vruler.innerHTML = vhtml;

    // colour palette
    const colors = [
        "#c8102e","#d9142b","#c9507d","#e85a73","#ee5f86","#ea6a9a","#ef7f97","#f08ea5","#fda47a","#f9ac8f","#f5bdb0","#f6c4c9","#f8d1e0","#f9dbe8","#fbe5ef",
        "#1f3470","#2a3b80","#3a3a8c","#10509a","#17589f","#2a62ad","#4a7cc0","#0f87cb","#1590d3","#1ea7e0","#29b6ea","#5cc0eb","#8fd0ee","#a8dcf0","#c9e8f4",
        "#0b4f3a","#0e6b45","#15803e","#1e8f3f","#21a04a","#159a6b","#12b091","#4cbcc0","#22c08a","#39c46f","#72c14d","#8ec63f","#b7d444","#c8db8c","#d5e8c8",
        "#e95420","#f0661a","#f27b13","#f58d0a","#f9a602","#fbb034","#fdc02f","#ffd31a","#ffe600","#fbe870","#f6d77f","#f4cf8c","#f9d8a0","#fbdca8","#fce4bd",
        "#7b2d7e","#6f3a8c","#7c4a9c","#6d4c9f","#9c5a96","#c274a8","#b79ccd","#c0a6d6","#d6b4d4","#e6c8dc",
        "#5a2a1a","#7a3c1e","#964e26","#a45c2c","#b5693a","#c88650","#deb887","#d8d4c8","#c8d0c4",
        "#000000","#3c3c3c","#505050","#646464","#787878","#8c8c8c","#a0a0a0","#b4b4b4","#c8c8c8","#ececec"
    ];
    document.getElementById("palette").innerHTML = colors.map(function (c) {
        return '<div class="w-[3px] mr-px h-full" style="background:' + c + '"></div>';
    }).join("");
</script>

</body>
</html>
